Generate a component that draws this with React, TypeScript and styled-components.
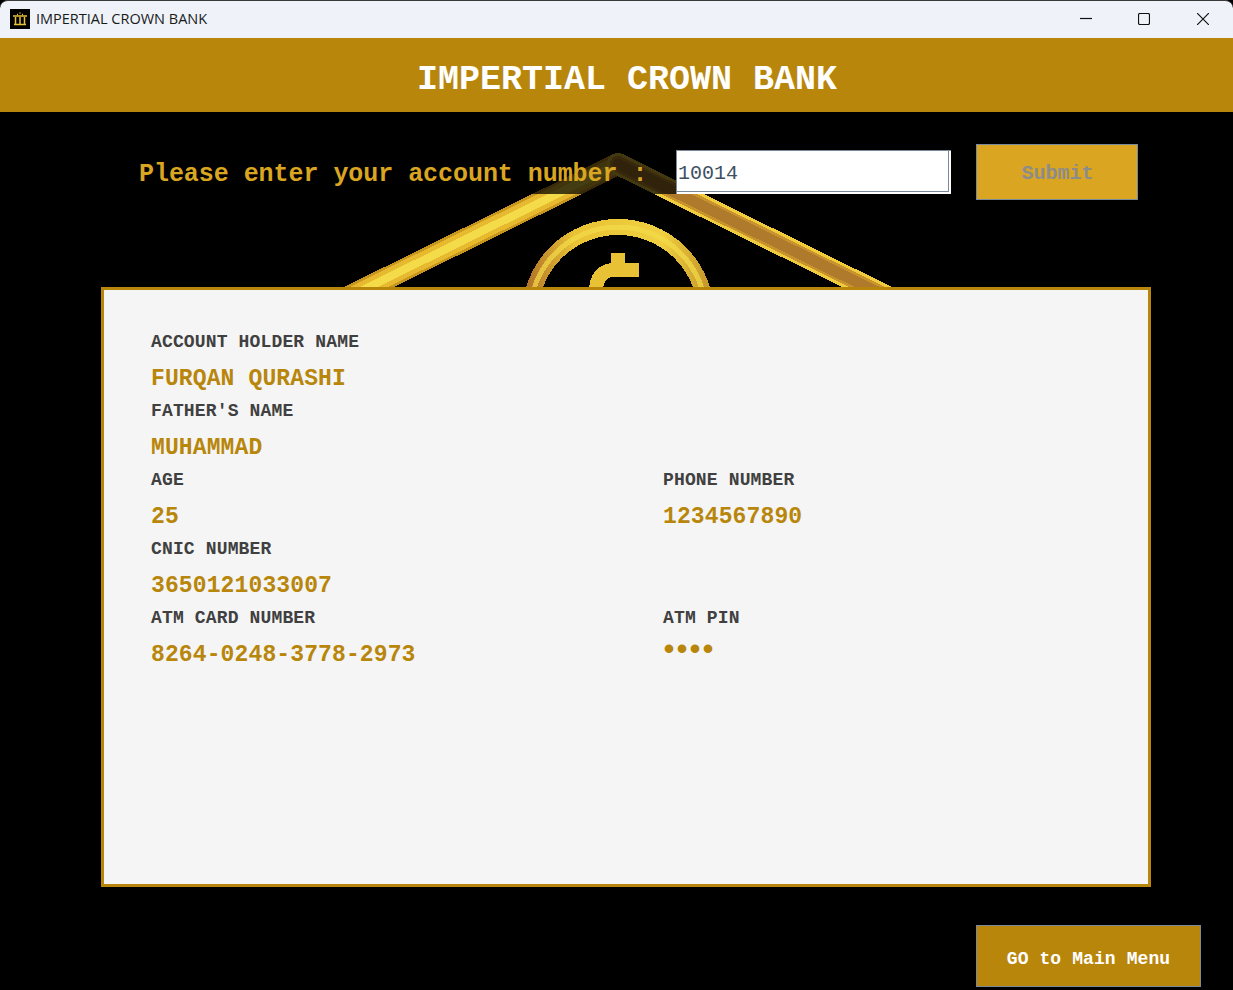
import styled, { createGlobalStyle } from 'styled-components';

const GlobalStyle = createGlobalStyle`
    html, body {
        margin: 0;
        padding: 0;
        background: #000;
    }
`;

const Window = styled.div`
    position: relative;
    width: 1233px;
    height: 990px;
    overflow: hidden;
    background: #000;
    font-family: "Liberation Mono", "Courier New", monospace;
`;

const TitleBar = styled.div`
    box-sizing: border-box;
    height: 38px;
    display: flex;
    align-items: center;
    padding: 0 0 2px 10px;
    background: #eff3f9;
    border-top: 1px solid #3a3a3a;
    border-radius: 8px 8px 0 0;
    font-family: "Open Sans", sans-serif;
    font-size: 14.5px;
    color: #1a1a1a;
`;

const AppIcon = styled.svg`
    width: 20px;
    height: 20px;
    margin-right: 6px;
`;

const WindowControls = styled.div`
    margin-left: auto;
    display: flex;
    align-items: center;
    padding-right: 1px;
`;

const ControlButton = styled.div`
    width: 58.5px;
    height: 35px;
    display: flex;
    align-items: center;
    justify-content: center;
`;

const Banner = styled.header`
    box-sizing: border-box;
    height: 74px;
    display: flex;
    align-items: center;
    justify-content: center;
    padding: 9px 0 0 21px;
    background: #b8860b;
    color: #fff;
    font-size: 35px;
    font-weight: 700;
`;

const Watermark = styled.svg`
    position: absolute;
    left: 300px;
    top: 140px;
    width: 640px;
    height: 160px;
`;

const SearchRow = styled.div`
    position: relative;
    display: flex;
    align-items: center;
    height: 56px;
    margin-top: 32px;
    padding-left: 139px;
`;

const AccountLabel = styled.label`
    box-sizing: border-box;
    width: 537px;
    height: 44px;
    padding-top: 5px;
    display: flex;
    align-items: center;
    background: rgba(0, 0, 0, 0.72);
    color: #daa520;
    font-size: 25px;
    font-weight: 700;
    letter-spacing: -0.05px;
`;

const AccountInput = styled.input`
    box-sizing: border-box;
    width: 275px;
    height: 44px;
    padding: 2px 0 0 1px;
    background: #fff;
    border: 0;
    border-top: 1px solid #7a8a9c;
    border-left: 1px solid #7a8a9c;
    box-shadow: inset -2px -2px 0 #fff, inset -3px -3px 0 #7a8a9c;
    outline: none;
    font-family: "Liberation Mono", monospace;
    font-size: 20px;
    color: #3d4f63;
`;

const ActionButton = styled.button<{ $muted?: boolean }>`
    box-sizing: border-box;
    padding: ${(p) => (p.$muted ? '3px 0 0 1px' : '5px 0 0')};
    display: flex;
    align-items: center;
    justify-content: center;
    border: 1px solid #7a8a9c;
    background: ${(p) => (p.$muted ? '#daa520' : '#b8860b')};
    color: ${(p) => (p.$muted ? '#8c8c8c' : '#fff')};
    font-family: "Liberation Mono", monospace;
    font-weight: 700;
    font-size: ${(p) => (p.$muted ? '20px' : '18px')};
    letter-spacing: ${(p) => (p.$muted ? '0' : '0.1px')};
    width: ${(p) => (p.$muted ? '162px' : '225px')};
    height: ${(p) => (p.$muted ? '56px' : '62px')};
    margin-left: ${(p) => (p.$muted ? '25px' : '0')};
`;

const DetailsCard = styled.section`
    position: relative;
    box-sizing: border-box;
    width: 1050px;
    height: 600px;
    margin: 87px 0 0 101px;
    padding: 41px 47px 0;
    background: #f5f5f5;
    border: 3px solid #b8860b;
    display: grid;
    grid-template-columns: 512px 1fr;
    grid-auto-rows: 61px;
    row-gap: 8px;
`;

const Field = styled.div<{ $full?: boolean }>`
    grid-column: ${(p) => (p.$full ? '1 / -1' : 'auto')};
`;

const FieldLabel = styled.div`
    height: 22px;
    line-height: 22px;
    font-size: 18px;
    font-weight: 700;
    letter-spacing: 0.15px;
    color: #404040;
`;

const FieldValue = styled.div`
    height: 26px;
    line-height: 26px;
    margin-top: 13px;
    font-size: 23px;
    font-weight: 700;
    letter-spacing: 0.12px;
    color: #b8860b;
`;

const PinDots = styled(FieldValue)`
    font-size: 30px;
    letter-spacing: -5px;
    margin-top: 9px;
    margin-left: -3px;
`;

const Footer = styled.footer`
    position: relative;
    display: flex;
    justify-content: flex-end;
    margin-top: 38px;
    padding-right: 32px;
`;

function CrownLogo() {
    return (
        <Watermark viewBox="300 140 640 160" shapeRendering="crispEdges">
            <defs>
                <linearGradient id="ring" x1="0" y1="0" x2="1" y2="0">
                    <stop offset="0" stopColor="#b5762a" />
                    <stop offset="0.25" stopColor="#e8c234" />
                    <stop offset="0.75" stopColor="#f0d040" />
                    <stop offset="1" stopColor="#c89a2c" />
                </linearGradient>
            </defs>
            <g fill="none" strokeLinejoin="round" strokeLinecap="round">
                <polyline points="618,164 300,321" stroke="#c8961f" strokeWidth="22" />
                <polyline points="618,164 300,321" stroke="#e6b92e" strokeWidth="17" />
                <polyline points="618,164 300,321" stroke="#f4dc48" strokeWidth="8" />
                <polyline points="618,164 936,321" stroke="#f0cc3c" strokeWidth="22" />
                <polyline points="618,164 936,321" stroke="#c8922c" strokeWidth="16" />
                <polyline points="618,164 936,321" stroke="#b07a2c" strokeWidth="11" />
                <circle cx="618" cy="315" r="88" stroke="url(#ring)" strokeWidth="16" />
                <circle cx="618" cy="315" r="88" stroke="#f4dc48" strokeWidth="5" opacity="0.7" />
            </g>
            <g fill="none" stroke="#e8c234" strokeWidth="14">
                <path d="M639 270 H612 Q596 272 596 292" />
                <path d="M618 253 V276" />
            </g>
        </Watermark>
    );
}

export default function App() {
    return (
        <Window>
            <GlobalStyle />
            <TitleBar>
                <AppIcon viewBox="0 0 20 20">
                    <rect width="20" height="20" fill="#000" />
                    <path d="M3 7h14M4 15.500h12M5.500 8v7M10 8v7M14.500 8v7" stroke="#e8c234" strokeWidth="1.500" fill="none" />
                    <path d="M7 5.500h1M9.500 4h1M12 5.500h1" stroke="#e8c234" strokeWidth="1.500" />
                </AppIcon>
                IMPERTIAL CROWN BANK
                <WindowControls>
                    <ControlButton>
                        <svg width="12" height="12" viewBox="0 0 12 12">
                            <path d="M0 5.500h12" stroke="#111" strokeWidth="1.200" />
                        </svg>
                    </ControlButton>
                    <ControlButton>
                        <svg width="12" height="12" viewBox="0 0 12 12">
                            <rect x="0.500" y="0.500" width="11" height="11" rx="1.500" fill="none" stroke="#111" strokeWidth="1.200" />
                        </svg>
                    </ControlButton>
                    <ControlButton>
                        <svg width="12" height="12" viewBox="0 0 12 12">
                            <path d="M0 0l12 12M12 0L0 12" stroke="#111" strokeWidth="1.200" />
                        </svg>
                    </ControlButton>
                </WindowControls>
            </TitleBar>
            <Banner>IMPERTIAL CROWN BANK</Banner>
            <CrownLogo />
            <SearchRow>
                <AccountLabel>Please enter your account number :</AccountLabel>
                <AccountInput defaultValue="10014" />
                <ActionButton $muted disabled>Submit</ActionButton>
            </SearchRow>
            <DetailsCard>
                <Field $full>
                    <FieldLabel>ACCOUNT HOLDER NAME</FieldLabel>
                    <FieldValue>FURQAN QURASHI</FieldValue>
                </Field>
                <Field $full>
                    <FieldLabel>FATHER'S NAME</FieldLabel>
                    <FieldValue>MUHAMMAD</FieldValue>
                </Field>
                <Field>
                    <FieldLabel>AGE</FieldLabel>
                    <FieldValue>25</FieldValue>
                </Field>
                <Field>
                    <FieldLabel>PHONE NUMBER</FieldLabel>
                    <FieldValue>1234567890</FieldValue>
                </Field>
                <Field $full>
                    <FieldLabel>CNIC NUMBER</FieldLabel>
                    <FieldValue>3650121033007</FieldValue>
                </Field>
                <Field>
                    <FieldLabel>ATM CARD NUMBER</FieldLabel>
                    <FieldValue>8264-0248-3778-2973</FieldValue>
                </Field>
                <Field>
                    <FieldLabel>ATM PIN</FieldLabel>
                    <PinDots>••••</PinDots>
                </Field>
            </DetailsCard>
            <Footer>
                <ActionButton>GO to Main Menu</ActionButton>
            </Footer>
        </Window>
    );
}
